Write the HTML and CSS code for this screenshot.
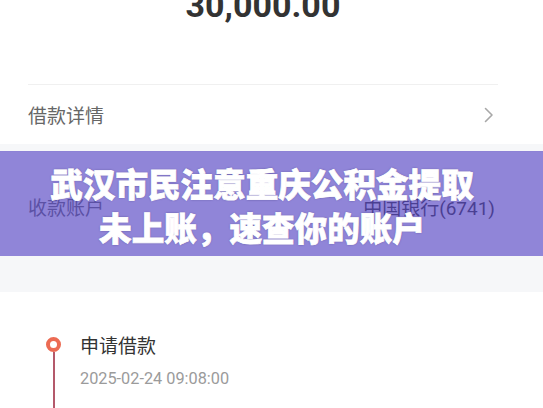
FILE: index.html
```html
<!DOCTYPE html>
<html lang="zh-CN">
<head>
<meta charset="utf-8">
<title>借款详情</title>
<link rel="stylesheet" href="styles.css">
</head>
<body>
<div class="page">
  <section class="card card-top">
    <div class="amount">30,000.00</div>
    <div class="row">
      <span class="label">借款详情</span>
      <svg class="chevron" width="10" height="16" viewBox="0 0 10 16"><path d="M1.5 1.5 L8 8 L1.5 14.5" fill="none" stroke="#a8a8a8" stroke-width="1.6" stroke-linecap="round" stroke-linejoin="round"/></svg>
    </div>
  </section>

  <section class="card card-account">
    <div class="row">
      <span class="label">收款账户</span>
      <span class="value">中国银行<span class="num">(6741)</span></span>
    </div>
  </section>

  <section class="card card-timeline">
    <div class="tl-item">
      <div class="tl-rail">
        <span class="tl-dot"></span>
        <span class="tl-line"></span>
      </div>
      <div class="tl-body">
        <div class="tl-title">申请借款</div>
        <div class="tl-time">2025-02-24 09:08:00</div>
      </div>
    </div>
  </section>

  <div class="banner">
    <h1 class="banner-title">武汉市民注意重庆公积金提取<br>未上账，速查你的账户</h1>
  </div>
</div>
</body>
</html>
```

FILE: styles.css
```css
* { box-sizing: border-box; }
html, body { margin: 0; padding: 0; }
body {
  width: 543px;
  height: 408px;
  overflow: hidden;
  background: #f6f7f9;
  font-family: "Noto Sans CJK SC", "Noto Sans", sans-serif;
}
.page {
  position: relative;
  display: flow-root;
  width: 543px;
  height: 408px;
  overflow: hidden;
}
.card { background: #fff; }

.card-top {
  margin-top: -12px;
  padding: 0 45px 0 28px;
}
.amount {
  font-family: Roboto, "Noto Sans", sans-serif;
  font-weight: 700;
  font-size: 34px;
  line-height: 34px;
  color: #333;
  text-align: center;
  padding-bottom: 62px;
  border-bottom: 1px solid #f0f0f0;
}
.row {
  height: 59px;
  display: flex;
  align-items: center;
  justify-content: space-between;
}
.label {
  font-size: 19px;
  color: #666;
}
.chevron { margin-right: 4px; }

.card-account {
  margin-top: 8px;
  height: 104px;
  padding: 24px 48px 0 28px;
}
.card-account .row { height: 60px; }
.value {
  font-size: 19px;
  color: #333;
}
.num { font-family: Roboto, sans-serif; }

.card-timeline {
  margin-top: 36px;
  height: 200px;
  padding: 40px 0 0 46px;
}
.tl-item {
  display: flex;
  gap: 19px;
}
.tl-rail {
  width: 15px;
  display: flex;
  flex-direction: column;
  align-items: center;
  padding-top: 5px;
}
.tl-dot {
  width: 15px;
  height: 15px;
  border-radius: 50%;
  border: 4.5px solid #ec6b53;
  background: #fff;
}
.tl-line {
  width: 2px;
  height: 80px;
  background: #b4596b;
}
.tl-title {
  font-size: 19px;
  line-height: 26px;
  color: #333;
}
.tl-time {
  margin-top: 10px;
  font-family: Roboto, sans-serif;
  font-size: 16.3px;
  line-height: 22px;
  color: #9b9b9b;
}

.banner {
  position: absolute;
  left: 0;
  top: 151px;
  width: 543px;
  height: 105px;
  background: rgba(86, 70, 196, 0.66);
  display: flex;
  align-items: center;
  justify-content: center;
  padding: 2px 19px 0 0;
}
.banner-title {
  margin: 0;
  font-family: "Noto Sans CJK SC", sans-serif;
  font-weight: 900;
  font-size: 32.6px;
  line-height: 44px;
  color: #fff;
  text-align: center;
  -webkit-text-stroke: 0.8px #fff;
  text-shadow: 0 0 2px rgba(40, 30, 90, 0.6);
}
```
